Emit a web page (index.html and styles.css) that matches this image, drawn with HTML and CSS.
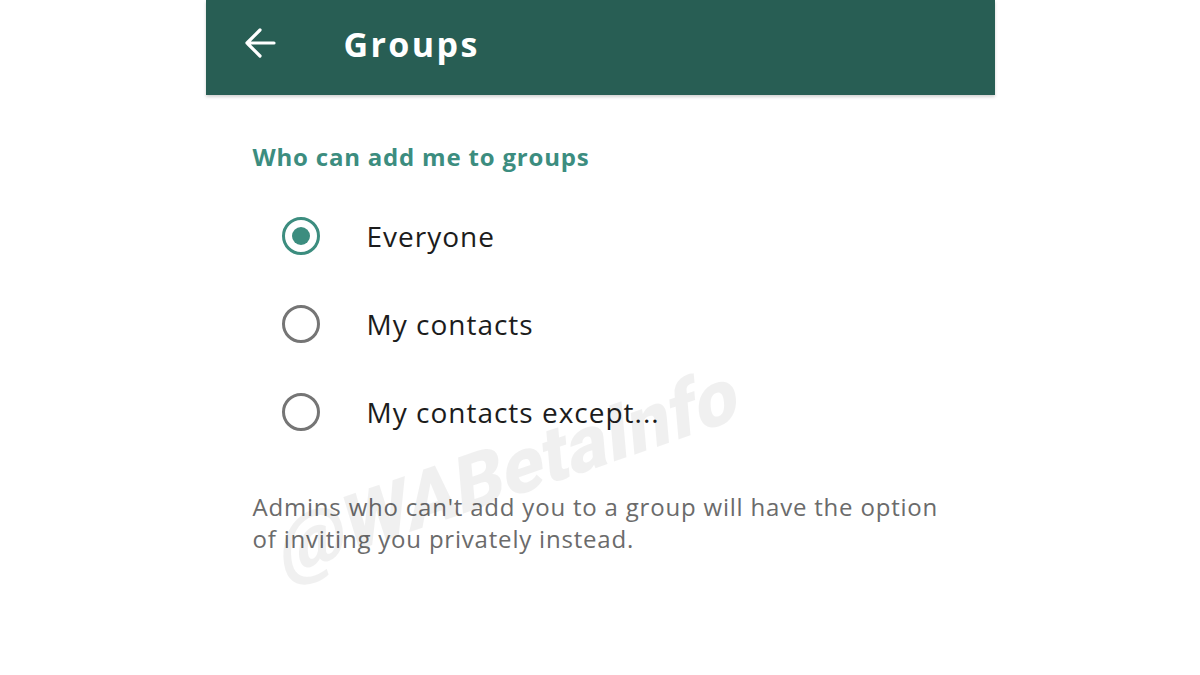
FILE: index.html
```html
<!DOCTYPE html>
<html>
<head>
<meta charset="utf-8">
<link rel="stylesheet" href="styles.css">
</head>
<body>
<div class="screen">
  <header class="appbar">
    <svg class="back" width="34" height="34" viewBox="0 0 34 34"><path d="M31 17H4M17 4L4 17l13 13" fill="none" stroke="#fff" stroke-width="3.2" stroke-linecap="round" stroke-linejoin="round"/></svg>
    <h1 class="title">Groups</h1>
  </header>
  <main class="content">
    <h2 class="section">Who can add me to groups</h2>
    <ul class="options">
      <li class="option"><span class="radio checked"></span><span class="label">Everyone</span></li>
      <li class="option"><span class="radio"></span><span class="label">My contacts</span></li>
      <li class="option"><span class="radio"></span><span class="label">My contacts except...</span></li>
    </ul>
    <p class="note">Admins who can't add you to a group will have the option of inviting you privately instead.</p>
    <div class="watermark">@WABetaInfo</div>
  </main>
</div>
</body>
</html>
```
FILE: styles.css
```css
html, body {
  margin: 0;
  padding: 0;
  background: #fff;
}
body {
  font-family: "Open Sans", Roboto, sans-serif;
  width: 1200px;
  height: 675px;
  overflow: hidden;
}
.screen {
  width: 789px;
  margin: 0 auto;
  position: relative;
}
.appbar {
  height: 95px;
  background: #285e54;
  display: flex;
  align-items: center;
  padding-left: 37px;
  box-shadow: 0 2px 3px rgba(0,0,0,0.18);
  position: relative;
  z-index: 1;
}
.back {
  display: block;
  margin-top: -10px;
}
.title {
  margin: -7px 0 0 67px;
  color: #fff;
  font-size: 34px;
  font-weight: 700;
  letter-spacing: 2.4px;
}
.content {
  position: relative;
  padding: 46px 0 0 47px;
  height: 534px;
  overflow: hidden;
}
.section {
  margin: 0;
  font-size: 24px;
  font-weight: 700;
  color: #3c8d7f;
  line-height: 32px;
  letter-spacing: 0.8px;
}
.options {
  list-style: none;
  margin: 44px 0 0 0;
  padding: 0;
  display: flex;
  flex-direction: column;
  gap: 50px;
}
.option {
  display: flex;
  align-items: center;
  height: 38px;
  padding-left: 29px;
}
.radio {
  width: 32px;
  height: 32px;
  border: 3px solid #757575;
  border-radius: 50%;
  box-sizing: content-box;
  flex: none;
  position: relative;
}
.radio.checked {
  border-color: #3c8d7f;
}
.radio.checked::after {
  content: "";
  position: absolute;
  left: 7px;
  top: 7px;
  width: 18px;
  height: 18px;
  border-radius: 50%;
  background: #3c8d7f;
}
.label {
  margin-left: 47px;
  font-size: 28px;
  color: #1c1c1c;
  letter-spacing: 1px;
}
.note {
  margin: 60px 0 0 0;
  width: 700px;
  font-size: 24px;
  line-height: 32px;
  color: #6b6b6b;
  letter-spacing: 0.8px;
}
.watermark {
  position: absolute;
  left: 70px;
  top: 408px;
  font-family: Roboto, sans-serif;
  font-size: 77px;
  font-weight: 900;
  color: rgba(0,0,0,0.06);
  transform: rotate(-19deg) skewX(-14deg);
  transform-origin: left top;
  white-space: nowrap;
  pointer-events: none;
}
```
